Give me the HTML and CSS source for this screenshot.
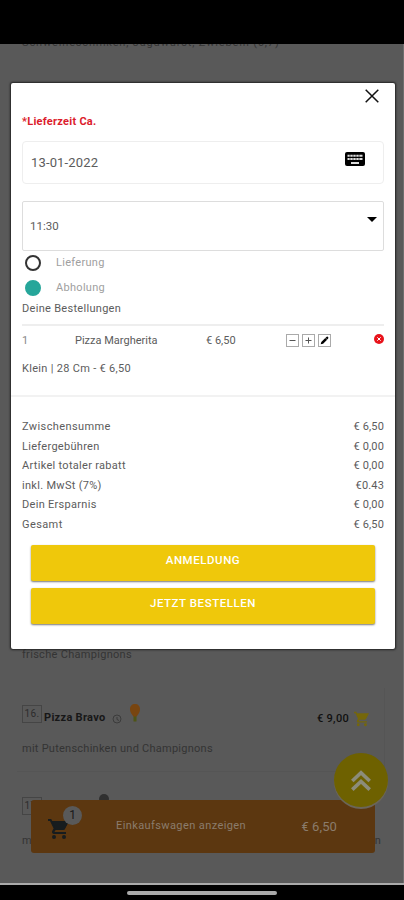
FILE: index.html
```html
<!DOCTYPE html>
<html lang="de">
<head>
<meta charset="utf-8">
<title>Warenkorb</title>
<link rel="stylesheet" href="styles.css">
</head>
<body>
<div class="phone">
  <div class="status"></div>
  <main class="menu">
    <p class="desc top"><span>Schweineschinken, Jagdwurst, Zwiebeln (6,7)</span></p>
    <p class="desc fresh"><span>frische Champignons</span></p>
    <section class="dish">
      <div class="dish-head">
        <span class="num">16.</span><b>Pizza Bravo</b>
        <svg class="info" viewBox="0 0 10 10"><circle cx="5" cy="5" r="4"/><path d="M5 3v2.500l2 1"/></svg>
        <svg class="leg" viewBox="0 0 12 20"><path class="bone" d="M4.500 12h3v6.500h-3z"/><path class="meat" d="M6 1C3 1 1 3 1 6.200c0 3 1.500 4.800 3.500 7.300h3c2-2.500 3.500-4.300 3.500-7.300C11 3 9 1 6 1z"/></svg>
        <span class="price">€ 9,00</span>
        <svg class="mini-cart" viewBox="1 2 21 20"><path d="M7 18a2 2 0 1 0 0 4 2 2 0 0 0 0-4zm10 0a2 2 0 1 0 0 4 2 2 0 0 0 0-4zM1 2v2h2l3.600 7.600-1.400 2.400C4.500 15.400 5.500 17 7 17h12v-2H7.400l1.200-2h7.400c.8 0 1.400-.4 1.800-1L22 4H5.200l-1-2z"/></svg>
      </div>
      <p class="desc">mit Putenschinken und Champignons</p>
    </section>
    <section class="dish next">
      <div class="dish-head"><span class="num">17.</span><i class="dot"></i></div>
      <p class="desc"><span>mit</span><span>n</span></p>
    </section>
  </main>
  <footer class="nav"><i></i></footer>

  <div class="cartbar">
    <div class="cart">
      <svg viewBox="1 2 21 20"><path d="M7 18a2 2 0 1 0 0 4 2 2 0 0 0 0-4zm10 0a2 2 0 1 0 0 4 2 2 0 0 0 0-4zM1 2v2h2l3.600 7.600-1.400 2.400C4.500 15.400 5.500 17 7 17h12v-2H7.400l1.200-2h7.400c.8 0 1.400-.4 1.800-1L22 4H5.200l-1-2z"/><path d="M5 4h17l-4.500 8.500H8.500z"/></svg>
      <span class="badge">1</span>
    </div>
    <span class="show">Einkaufswagen anzeigen</span>
    <span class="sum">€ 6,50</span>
  </div>
  <div class="up"><svg viewBox="0 0 24 26"><path d="M2.500 13.500 12 4.500l9.500 9M2.500 23 12 14l9.500 9"/></svg></div>

  <div class="modal">
    <svg class="close" viewBox="0 0 14 14"><path d="M.7.7l12.600 12.600M13.300.7.7 13.300"/></svg>
    <div class="label"><b>*Lieferzeit Ca.</b></div>
    <div class="date"><span>13-01-2022</span>
      <svg viewBox="0 0 20 14"><rect width="20" height="14" rx="2"/><path class="keys" d="M2.500 3.800h15M2.500 7h15"/><path class="gaps" d="M5 2v7M8 2v7M11 2v7M14 2v7"/><path class="space" d="M6 11h8"/></svg>
    </div>
    <div class="time"><span>11:30</span><i></i></div>
    <div class="radio"><i></i><span>Lieferung</span></div>
    <div class="radio on"><i></i><span>Abholung</span></div>
    <div class="orders">Deine Bestellungen</div>
    <div class="item">
      <span class="qty">1</span><span class="name">Pizza Margherita</span><span class="cost">€ 6,50</span>
      <div class="tools">
        <svg viewBox="0 0 13 13"><rect x=".5" y=".5" width="12" height="12"/><path d="M3.500 6.500h6"/></svg>
        <svg viewBox="0 0 13 13"><rect x=".5" y=".5" width="12" height="12"/><path d="M3.500 6.500h6M6.500 3.500v6"/></svg>
        <svg viewBox="0 0 13 13"><rect x=".5" y=".5" width="12" height="12"/><path class="pen" d="M2.700 10.300l.6-2.300 4-4 1.800 1.800-4 4zM7.500 3.800l1.300-1.100c.7-.4 1.900.7 1.500 1.500l-1 1.300z"/></svg>
      </div>
      <svg class="del" viewBox="0 0 10 10"><circle cx="5" cy="5" r="5"/><path d="M3.300 3.300l3.400 3.400M6.700 3.300 3.300 6.700"/></svg>
    </div>
    <div class="variant"><span>Klein | 28 Cm - € 6,50</span></div>
    <div class="totals">
      <div><span class="wide">Zwischensumme</span><span>€ 6,50</span></div>
      <div><span>Liefergebühren</span><span>€ 0,00</span></div>
      <div><span>Artikel totaler rabatt</span><span>€ 0,00</span></div>
      <div><span>inkl. MwSt (7%)</span><span>€0.43</span></div>
      <div><span>Dein Ersparnis</span><span>€ 0,00</span></div>
      <div><span class="wide">Gesamt</span><span>€ 6,50</span></div>
    </div>
    <div class="btn">ANMELDUNG</div>
    <div class="btn">JETZT BESTELLEN</div>
  </div>
</div>
</body>
</html>
```
FILE: styles.css
```css
* { box-sizing: border-box; }
body { margin: 0; background: #595959; font-family: Roboto, "Liberation Sans", sans-serif; font-size: 11px; letter-spacing: .3px; line-height: 14px; color: #5c5c5c; }
p { margin: 0; }
svg { display: block; flex: none; }
.phone { position: relative; width: 404px; height: 900px; overflow: hidden; display: flex; flex-direction: column; }
.status { height: 44px; background: #000; flex: none; position: relative; z-index: 1; }
.menu { flex: 1; min-height: 0; padding: 0 18px 0 17px; border-right: 1px solid #6e6e6e; }
.desc { color: #343434; padding-left: 5px; }
.top { height: 14px; margin-top: -8px; letter-spacing: .85px; white-space: nowrap; }
.fresh { margin-top: 598px; }
.dish { height: 84px; margin-top: 26px; padding-top: 12px; border: solid #555; border-width: 0 1px 1px 0; }
.dish-head { display: flex; align-items: flex-start; height: 37px; padding-left: 5px; color: #171717; }
.dish-head b { margin: 11px 0 0 2px; letter-spacing: .3px; }
.dish .desc { margin-top: 5px; letter-spacing: .25px; }
.num { width: 20px; height: 18px; margin-top: 5px; padding-top: 1px; border: 1px solid #454545; text-align: center; font-size: 10px; color: #2c2c2c; }
.info { width: 10px; height: 10px; margin: 14px 0 0 6px; fill: none; stroke: #333; stroke-width: .8; }
.leg { width: 12px; height: 20px; margin: 3px 0 0 7px; }
.meat { fill: #784510; }
.bone { fill: #4e5515; }
.price { margin: 12px 5px 0 auto; color: #101010; font-weight: 500; letter-spacing: .3px; }
.mini-cart { width: 15px; height: 16px; margin: 11px 15px 0 0; fill: #75670a; }
.dish.next { margin-top: 18px; border: 0; padding-top: 8px; }
.next .num { margin-top: -1px; }
.dish.next .desc { display: flex; justify-content: space-between; margin-top: -1px; padding-right: 4px; }
.dot { width: 10px; height: 10px; margin: -4px 0 0 57px; border-radius: 50%; background: #303030; }
.nav { height: 17px; flex: none; background: #000; border-top: 2px solid #aaa; display: flex; justify-content: center; align-items: flex-start; padding-top: 6px; }
.nav i { width: 150px; height: 4px; border-radius: 2px; background: #aaa; }
.cartbar { position: absolute; left: 31px; top: 800px; width: 344px; height: 53px; border-radius: 3px; background: #5c3710; color: #8b7c6c; display: flex; align-items: center; }
.cart { position: relative; padding: 5px 0 0 17px; }
.cart svg { width: 21px; height: 22px; fill: #171c1e; }
.badge { position: absolute; left: 32px; top: -7px; width: 19px; height: 19px; border-radius: 50%; background: #595959; color: #181818; text-align: center; line-height: 19px; font-size: 12px; letter-spacing: 0; }
.show { margin-left: 47px; margin-top: -2px; font-size: 11px; letter-spacing: .4px; }
.sum { margin-left: auto; padding-right: 38px; font-size: 13px; letter-spacing: .1px; }
.up { position: absolute; left: 334px; top: 753px; width: 54px; height: 54px; border-radius: 50%; background: #6e6100; display: grid; place-items: center; box-shadow: 0 2px 0 #6b6559; }
.up svg { width: 22px; height: 25px; fill: none; stroke: #8c8c7a; stroke-width: 4; }
.modal { position: absolute; left: 11px; top: 83px; width: 384px; height: 566px; padding: 6px 11px 0; background: #fff; border-radius: 2px; box-shadow: 0 0 2px 1px #222; display: flex; flex-direction: column; }
.modal > * { flex: none; }
.close { width: 14px; height: 14px; margin: 0 5px 0 auto; fill: none; stroke: #111; stroke-width: 1.500; }
.label { height: 38px; padding-top: 12px; color: #dc1c2c; letter-spacing: .25px; }
.date { height: 43px; border: 1px solid #eee; border-radius: 4px; display: flex; justify-content: space-between; align-items: center; padding: 0 18px 0 8px; font-size: 13px; letter-spacing: .15px; }
.date svg { width: 20px; height: 14px; margin-top: -7px; }
.date rect { fill: #000; }
.keys { stroke: #ddd; stroke-width: 2; }
.gaps { stroke: #000; stroke-width: .6; }
.space { stroke: #ddd; stroke-width: 2; }
.time { height: 50px; margin-top: 17px; border: 1px solid #ddd; border-radius: 2px; display: flex; justify-content: space-between; padding: 17px 6px 0 7px; font-size: 11.500px; letter-spacing: 0; }
.time i { width: 0; height: 0; margin-top: -2px; border: 5px solid transparent; border-top-color: #000; border-bottom: 0; }
.radio { height: 25px; display: flex; align-items: center; color: #a0a0a0; }
.radio i { width: 16px; height: 16px; margin: -2px 15px 0 3px; border: 2px solid #333; border-radius: 50%; }
.radio span { margin-top: -2px; }
.radio.on i { background: #26a69a; border-color: #26a69a; }
.orders { height: 25px; padding-top: 1px; border-bottom: 2px solid #eee; }
.item { height: 30px; display: flex; align-items: center; }
.qty { width: 53px; color: #888; }
.name { width: 131px; letter-spacing: 0; }
.cost { width: 80px; letter-spacing: 0; }
.tools { display: flex; gap: 3px; margin-top: -2px; }
.tools svg { width: 13px; height: 13px; fill: none; stroke: #555; }
.tools rect { stroke: #aaa; }
.tools .pen { fill: #000; stroke: none; }
.del { width: 10px; height: 10px; margin: -4px 0 0 auto; fill: #e8131b; stroke: #fff; }
.del circle { stroke: none; }
.variant { height: 41px; margin: 0 -11px; padding: 6px 11px 0; border-bottom: 2px solid #f2f2f2; }
.totals { padding-top: 21px; height: 149px; margin-top: -1px; }
.totals div { display: flex; justify-content: space-between; height: 19.500px; line-height: 19.500px; }
.totals span:last-child { letter-spacing: .15px; }
.totals .wide { letter-spacing: .4px; }
.btn { height: 36px; margin: 0 9px 7px 9px; border-radius: 2px; background: #efc80b; box-shadow: 0 1px 2px #777; color: #fff; text-align: center; padding-top: 8px; font-size: 11.500px; font-weight: 500; letter-spacing: .55px; }
```
